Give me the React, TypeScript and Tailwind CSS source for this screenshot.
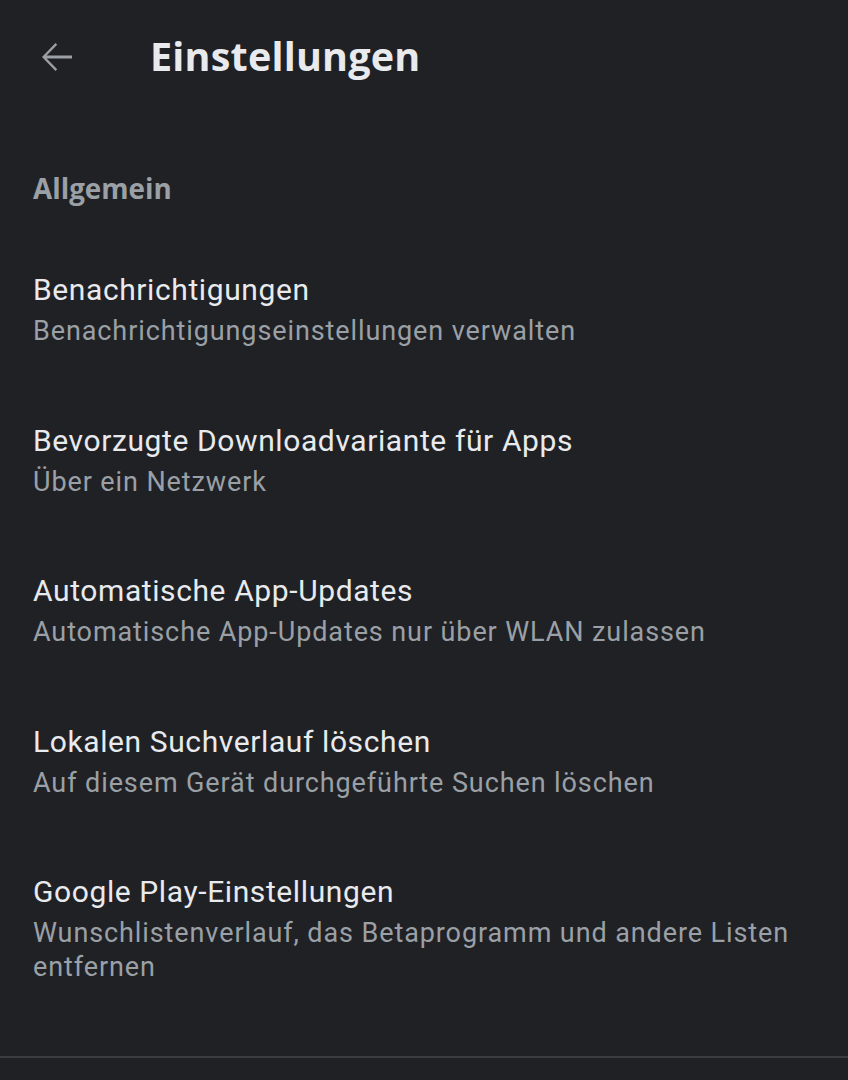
import React from "react";

const items = [
  { title: "Benachrichtigungen", sub: "Benachrichtigungseinstellungen verwalten" },
  { title: "Bevorzugte Downloadvariante für Apps", sub: "Über ein Netzwerk" },
  { title: "Automatische App-Updates", sub: "Automatische App-Updates nur über WLAN zulassen" },
  { title: "Lokalen Suchverlauf löschen", sub: "Auf diesem Gerät durchgeführte Suchen löschen" },
  { title: "Google Play-Einstellungen", sub: "Wunschlistenverlauf, das Betaprogramm und andere Listen entfernen" },
];

export default function App() {
  return (
    <div className="w-[848px] h-[1080px] bg-[#202125] overflow-hidden flex flex-col" style={{ fontFamily: "Roboto, 'Noto Sans', sans-serif" }}>
      <div className="h-[114px] flex items-center shrink-0">
        <div className="w-[48px] h-[48px] ml-[32px]">
          <svg viewBox="0 0 24 24" width="48" height="48" fill="#9aa0a6">
            <path d="M20 11.2H7.3l5.3-5.3L11.75 5 5 12l6.75 7 .85-.9-5.3-5.3H20v-1.6z" />
          </svg>
        </div>
        <div className="ml-[70px] text-[39.5px] font-bold text-[#e8eaed] tracking-[0.2px]" style={{ fontFamily: "'Open Sans', sans-serif" }}>
          Einstellungen
        </div>
      </div>
      <div className="mt-[56px] px-[33px] text-[27.8px] leading-[36px] font-bold text-[#9aa0a6]" style={{ fontFamily: "'Open Sans', sans-serif" }}>
        Allgemein
      </div>
      <div className="mt-[29px] flex flex-col">
        {items.map((it) => (
          <div key={it.title} className="pl-[33px] pr-[33px] pt-[35px] pb-[37.5px] flex flex-col">
            <div className="text-[30px] leading-[40px] text-[#e8eaed] tracking-[0.6px]">{it.title}</div>
            <div className="mt-[4px] text-[27px] leading-[34px] text-[#9aa0a6] tracking-[0.9px]">{it.sub}</div>
          </div>
        ))}
      </div>
      <div className="mt-auto mb-[22px] h-[2px] bg-[#3b3c40]" />
    </div>
  );
}
